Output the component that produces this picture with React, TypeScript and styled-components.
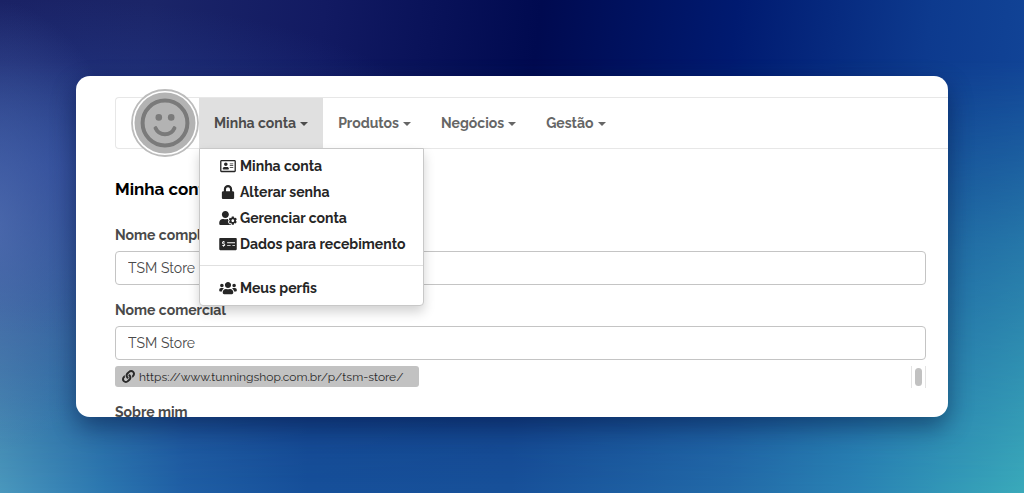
import React from "react";
import styled, { createGlobalStyle } from "styled-components";
import {
  FaLink,
  FaLock,
  FaMoneyCheckAlt,
  FaRegAddressCard,
  FaUserCog,
  FaUsers,
} from "react-icons/fa";

const GlobalStyle = createGlobalStyle`
  *, *::before, *::after { box-sizing: border-box; }
  body {
    margin: 0;
    font-family: Raleway, Lato, "Open Sans", sans-serif;
    font-size: 14px;
    line-height: 20px;
    color: #4a4a4a;
  }
`;

const Backdrop = styled.div`
  position: relative;
  isolation: isolate;
  height: 100vh;
  padding: 76px;
  display: flex;
  background: linear-gradient(97deg, #1a2265 0%, #1b2568 14%, #121a62 30%, #000a50 50%, #001a70 68%, #0d3a8e 86%, #13489a 100%);

  &::before,
  &::after {
    content: "";
    position: absolute;
    inset: 0;
    z-index: -1;
  }

  &::before {
    background: linear-gradient(90deg, #4a98bd 0%, #2c78b0 10%, #1f5fa5 18%, #16509a 30%, #17519a 50%, #226aa8 71%, #2a84b4 84%, #3aaaba 100%);
    mask-image: linear-gradient(180deg, transparent 12%, rgba(0, 0, 0, 0.5) 50%, #000 100%);
  }

  &::after {
    background:
      radial-gradient(ellipse 14% 46% at -1% 46%, rgba(84, 112, 180, 0.75) 0%, rgba(72, 100, 174, 0) 100%),
      radial-gradient(ellipse 40% 34% at 6% 34%, rgba(40, 68, 152, 0.75) 0%, rgba(40, 62, 146, 0) 100%);
  }
`;

const CardShadow = styled.div`
  flex: 1;
  min-width: 0;
  display: flex;
  border-radius: 14px;
  box-shadow: 0 10px 24px rgba(0, 10, 50, 0.45);
`;

const Card = styled.main`
  flex: 1;
  min-width: 0;
  padding: 21px 22px 0 39px;
  overflow: hidden;
  background: #fff;
  border-radius: 14px;
`;

const Navbar = styled.nav`
  display: flex;
  height: 52px;
  margin-right: -22px;
  padding-left: 15px;
  border: 1px solid #e7e7e7;
  border-right: 0;
  border-radius: 4px 0 0 4px;
`;

const Avatar = styled.svg`
  flex: none;
  width: 68px;
  height: 68px;
  margin-top: -9px;
`;

const Menu = styled.ul`
  display: flex;
  margin: 0;
  padding: 0;
  list-style: none;
`;

const MenuEntry = styled.li`
  position: relative;
`;

const MenuButton = styled.button<{ $open?: boolean }>`
  display: flex;
  align-items: center;
  gap: 4px;
  height: 50px;
  padding: 0 15px;
  border: 0;
  background: ${(p) => (p.$open ? "#e0e0e0" : "transparent")};
  color: ${(p) => (p.$open ? "#4c4c4c" : "#666")};
  font: inherit;
  font-weight: 700;
  white-space: nowrap;
`;

const Caret = styled.span`
  margin-top: 2px;
  border: 4px solid transparent;
  border-top-color: currentColor;
  border-bottom: 0;
`;

const Dropdown = styled.ul`
  position: absolute;
  top: 100%;
  left: 0;
  z-index: 10;
  width: 225px;
  margin: 0;
  padding: 4px 0;
  list-style: none;
  background: #fff;
  border: 1px solid #c8c8c8;
  border-radius: 0 0 4px 4px;
  box-shadow: 0 6px 12px rgba(0, 0, 0, 0.18);
`;

const DropdownLink = styled.a`
  display: flex;
  align-items: center;
  gap: 3px;
  height: 26px;
  padding: 0 19px;
  color: #262626;
  font-weight: 700;
  text-decoration: none;
  white-space: nowrap;

  svg {
    flex: none;
    width: 18px;
    height: 14px;
  }
`;

const Divider = styled.li`
  height: 1px;
  margin: 8px 0 9px;
  background: #e0e0e0;
`;

const Title = styled.h1`
  margin: 28px 0 24px;
  color: #000;
  font-size: 17px;
  line-height: 24px;
  font-weight: 700;
`;

const Field = styled.div`
  display: flex;
  flex-direction: column;
  margin-bottom: 15px;
`;

const Label = styled.label`
  margin-bottom: 6px;
  font-weight: 700;
`;

const TextInput = styled.input`
  width: 100%;
  height: 34px;
  padding: 0 12px;
  border: 1px solid #c4c4c4;
  border-radius: 4px;
  background: #fff;
  color: #4a4a4a;
  font: inherit;
`;

const AddressRow = styled.div`
  display: flex;
  justify-content: space-between;
  margin: 6px 0 14px;
`;

const Address = styled.a`
  display: flex;
  align-items: center;
  gap: 4px;
  height: 21px;
  padding: 0 16px 0 7px;
  border-radius: 3px;
  background: #c2c2c2;
  color: #2a2a2a;
  font-size: 12px;
  text-decoration: none;
`;

const ScrollTrack = styled.div`
  width: 15px;
  padding: 2px;
  border: 1px solid #e4e4e4;
  border-width: 0 1px;
`;

const ScrollThumb = styled.div`
  height: 18px;
  margin: 0 1px;
  border-radius: 4px;
  background: #c1c1c1;
`;

const accountLinks = [
  { label: "Minha conta", icon: FaRegAddressCard },
  { label: "Alterar senha", icon: FaLock },
  { label: "Gerenciar conta", icon: FaUserCog },
  { label: "Dados para recebimento", icon: FaMoneyCheckAlt },
];

function DropdownItem({ label, icon: Icon }: { label: string; icon: React.ComponentType }) {
  return (
    <li>
      <DropdownLink href="#">
        <Icon />
        {label}
      </DropdownLink>
    </li>
  );
}

function Smiley() {
  return (
    <Avatar viewBox="0 0 68 68" role="img" aria-label="Perfil">
      <circle cx="34" cy="34" r="33" fill="#fff" stroke="#bcbcbc" strokeWidth="1.8" />
      <circle cx="34" cy="34" r="30.5" fill="#b3b3b3" />
      <g fill="none" stroke="#7a7a7a" strokeWidth="4" strokeLinecap="round">
        <circle cx="34" cy="34" r="22.4" />
        <path d="M24.6 39.2C26.4 43.2 29.8 45.2 34 45.2s7.6-2 9.4-6" />
      </g>
      <circle cx="27.8" cy="28.4" r="3.3" fill="#7a7a7a" />
      <circle cx="40.2" cy="28.4" r="3.3" fill="#7a7a7a" />
    </Avatar>
  );
}

export default function App() {
  return (
    <>
      <GlobalStyle />
      <Backdrop>
        <CardShadow>
          <Card>
            <Navbar>
              <Smiley />
              <Menu>
                <MenuEntry>
                  <MenuButton $open aria-expanded="true">
                    Minha conta <Caret />
                  </MenuButton>
                  <Dropdown>
                    {accountLinks.map((link) => (
                      <DropdownItem key={link.label} {...link} />
                    ))}
                    <Divider role="separator" />
                    <DropdownItem label="Meus perfis" icon={FaUsers} />
                  </Dropdown>
                </MenuEntry>
                {["Produtos", "Negócios", "Gestão"].map((name) => (
                  <MenuEntry key={name}>
                    <MenuButton>
                      {name} <Caret />
                    </MenuButton>
                  </MenuEntry>
                ))}
              </Menu>
            </Navbar>
            <Title>Minha conta</Title>
            <Field>
              <Label htmlFor="full-name">Nome completo</Label>
              <TextInput id="full-name" defaultValue="TSM Store" />
            </Field>
            <Field>
              <Label htmlFor="trade-name">Nome comercial</Label>
              <TextInput id="trade-name" defaultValue="TSM Store" />
              <AddressRow>
                <Address href="#">
                  <FaLink size={13} />
                  https://www.tunningshop.com.br/p/tsm-store/
                </Address>
                <ScrollTrack>
                  <ScrollThumb />
                </ScrollTrack>
              </AddressRow>
              <Label as="span">Sobre mim</Label>
            </Field>
          </Card>
        </CardShadow>
      </Backdrop>
    </>
  );
}
